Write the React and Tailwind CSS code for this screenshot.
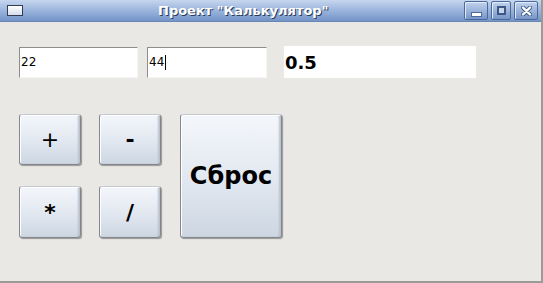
const font = { fontFamily: '"DejaVu Sans", sans-serif' };

const CalcButton = ({ children, className = '' }) => (
  <button
    className={`flex items-center justify-center rounded-[3px] border border-[#84878c] border-t-[#c4c8cf] bg-gradient-to-b from-[#f4f7fb] via-[#e3e9f1] to-[#cdd6e2] text-black shadow-[1px_1px_1px_rgba(0,0,0,0.35),inset_1px_1px_0_#ffffff,inset_-2px_0_2px_#b9c1cc] ${className}`}
  >
    {children}
  </button>
);

const TitleButton = ({ children, className = '' }) => (
  <div className={`flex h-[19px] items-center justify-center rounded-[2px] border border-[#4a6898] bg-gradient-to-b from-[#c2d3ec] to-[#7796c8] shadow-[inset_1px_1px_0_#e2ebf7] ${className}`}>
    {children}
  </div>
);

export default function App() {
  return (
    <div className="flex h-[283px] w-[543px] flex-col overflow-hidden border-r-2 border-b-2 border-[#9c9a96] bg-[#eae8e5]" style={font}>
      <div className="flex h-[22px] items-center border-b border-[#6c87b3] bg-gradient-to-b from-[#c6d6ee] via-[#9ab4dc] to-[#7494c8] pl-[7px] pr-[3px]">
        <div className="h-[11px] w-[16px] border border-[#2e3c55] bg-gradient-to-b from-[#ffffff] to-[#d6dce8]" />
        <div className="flex-1 pl-[135px] text-[13px] font-bold text-white [text-shadow:1px_1px_0_#2a3b5a]">
          Проект "Калькулятор"
        </div>
        <div className="flex gap-[3px]">
          <TitleButton className="w-[24px]">
            <div className="mt-[7px] h-[3px] w-[9px] bg-white shadow-[0_0_0_1px_#4d6c9c]" />
          </TitleButton>
          <TitleButton className="w-[20px]">
            <div className="h-[9px] w-[9px] border-2 border-[#3d5886] bg-[#c8d6ec]" />
          </TitleButton>
          <TitleButton className="w-[24px]">
            <svg width="11" height="10" viewBox="0 0 11 10">
              <path d="M2 1.5 L9 8.5 M9 1.5 L2 8.5" stroke="#3d5886" strokeWidth="4" strokeLinecap="round" />
              <path d="M2 1.5 L9 8.5 M9 1.5 L2 8.5" stroke="#ffffff" strokeWidth="2.4" strokeLinecap="round" />
            </svg>
          </TitleButton>
        </div>
      </div>

      <div className="flex flex-col px-[19px] pt-[24px]">
        <div className="flex items-center">
          <input
            defaultValue="22"
            className="h-[31px] w-[119px] border border-[#8d8d8d] border-r-[#f6f6f6] border-b-[#f6f6f6] bg-white px-[1px] text-[12px] text-black outline-none"
            style={font}
          />
          <div className="ml-[9px] flex h-[31px] w-[120px] items-center border border-[#8d8d8d] border-r-[#f6f6f6] border-b-[#f6f6f6] bg-white px-[1px] text-[12px] text-black">
            44<span className="ml-[1px] h-[15px] w-px bg-black" />
          </div>
          <div className="ml-[17px] flex h-[32px] w-[192px] items-center bg-white px-[1px] text-[18px] font-bold text-black">
            0.5
          </div>
        </div>

        <div className="mt-[36px] flex gap-[19px]">
          <div className="grid grid-cols-[62px_62px] grid-rows-[51px_52px] gap-x-[18px] gap-y-[21px]">
            <CalcButton className="text-[22px]">+</CalcButton>
            <CalcButton className="text-[22px] font-bold">-</CalcButton>
            <CalcButton className="text-[22px] font-bold">*</CalcButton>
            <CalcButton className="text-[22px] font-bold">/</CalcButton>
          </div>
          <CalcButton className="h-[124px] w-[102px] text-[24px] font-bold">Сброс</CalcButton>
        </div>
      </div>
    </div>
  );
}
